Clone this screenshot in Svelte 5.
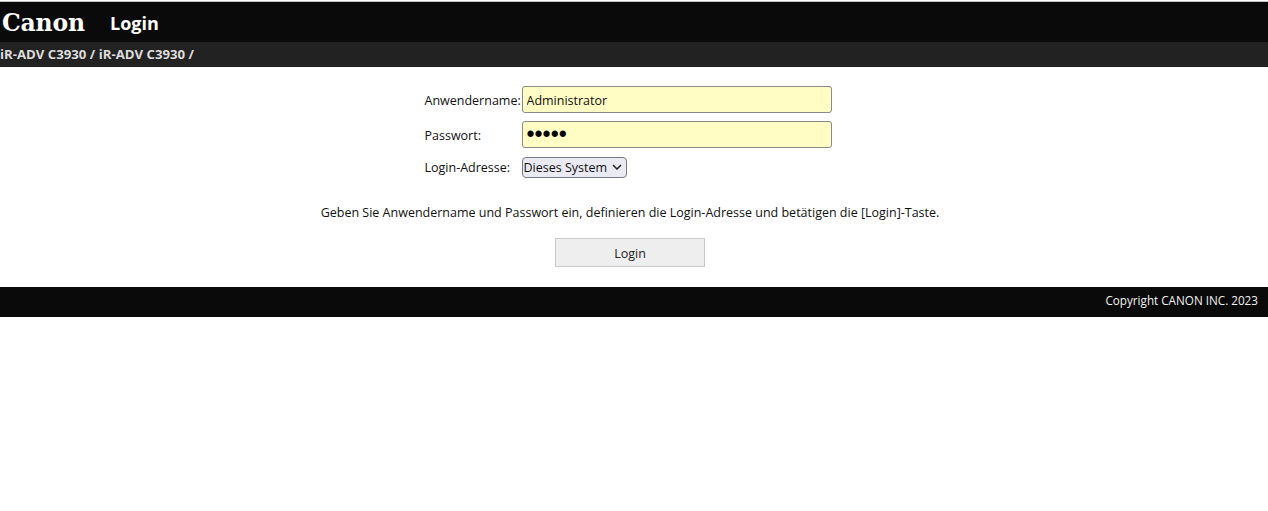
<script>
	let username = $state('Administrator');
	let password = $state('12345');
</script>

<div class="page">
	<header class="top">
		<span class="logo">Canon</span>
		<h1 class="title">Login</h1>
	</header>
	<div class="crumb">iR-ADV C3930 / iR-ADV C3930 /</div>

	<main class="content">
		<form class="login" onsubmit={(e) => e.preventDefault()}>
			<div class="fields">
				<label class="lbl" for="user">Anwendername:</label>
				<input id="user" class="text" type="text" bind:value={username} />
				<label class="lbl" for="pass">Passwort:</label>
				<input id="pass" class="text secret" type="password" bind:value={password} />
				<label class="lbl" for="dest">Login-Adresse:</label>
				<div class="select-wrap">
					<select id="dest" class="dest">
						<option>Dieses System</option>
					</select>
					<svg class="chevron" width="10" height="6" viewBox="0 0 10 6" aria-hidden="true">
						<path d="M1 1l4 4 4-4" fill="none" stroke="#222" stroke-width="1.5" />
					</svg>
				</div>
			</div>
			<p class="hint">Geben Sie Anwendername und Passwort ein, definieren die Login-Adresse und betätigen die [Login]-Taste.</p>
			<button class="submit" type="submit">Login</button>
		</form>
	</main>

	<footer class="bottom">Copyright CANON INC. 2023</footer>
</div>

<style>
	:global(body) {
		background: #fff;
	}

	.page {
		font-family: "Open Sans", "Noto Sans", sans-serif;
		font-size: 12.5px;
		color: #111;
		padding-top: 1px;
	}

	.top {
		display: flex;
		align-items: center;
		box-sizing: border-box;
		height: 41px;
		padding-top: 2px;
		background: #0a0a0a;
		border-top: 1px solid #c4c4c4;
		color: #fff;
	}

	.logo {
		width: 110px;
		padding-left: 2px;
		box-sizing: border-box;
		font-family: "DejaVu Serif", serif;
		font-weight: 700;
		font-size: 23.5px;
		letter-spacing: -0.2px;
	}

	.title {
		margin: 0;
		font-size: 18px;
		font-weight: 700;
	}

	.crumb {
		height: 25px;
		line-height: 25px;
		background: #222;
		color: #ddd;
		font-size: 13.2px;
		font-weight: 700;
		white-space: nowrap;
	}

	.content {
		display: flex;
		justify-content: center;
		padding: 19px 8px 20px 0;
	}

	.login {
		display: flex;
		flex-direction: column;
		align-items: center;
		width: 640px;
	}

	.fields {
		display: grid;
		grid-template-columns: 97px 310px;
		row-gap: 8px;
		align-items: center;
		margin-right: 4px;
	}

	.lbl {
		padding-top: 1px;
	}

	.text {
		box-sizing: border-box;
		width: 310px;
		height: 27px;
		padding: 1px 4px 0;
		background: #fffcc4;
		border: 1px solid #8a8a8a;
		border-radius: 3px;
		font: inherit;
		color: #111;
	}

	.secret {
		padding-top: 0;
		font-family: "Liberation Sans", sans-serif;
		font-size: 23px;
		color: #000;
	}

	.select-wrap {
		position: relative;
		width: 105px;
		height: 21px;
		margin-top: 1px;
	}

	.dest {
		appearance: none;
		width: 100%;
		height: 100%;
		padding: 0 0 0 1px;
		background: #eaeaf2;
		border: 1px solid #77778a;
		border-radius: 4px;
		font: inherit;
		color: #111;
	}

	.chevron {
		position: absolute;
		top: 7px;
		right: 5px;
		pointer-events: none;
	}

	.hint {
		margin: 26px 0 17px;
		white-space: nowrap;
	}

	.submit {
		width: 150px;
		height: 29px;
		padding-top: 2px;
		background: #eee;
		border: 1px solid #ccc;
		font: inherit;
		color: #222;
	}

	.bottom {
		height: 30px;
		line-height: 27px;
		padding-right: 10px;
		background: #0a0a0a;
		color: #f2f2f2;
		text-align: right;
		font-size: 11.7px;
	}
</style>
